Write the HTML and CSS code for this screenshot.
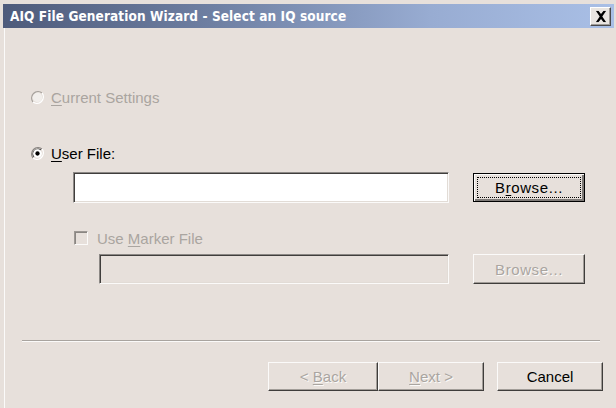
FILE: index.html
```html
<!DOCTYPE html>
<html>
<head>
<meta charset="utf-8">
<title>AIQ File Generation Wizard</title>
<link rel="stylesheet" href="styles.css">
</head>
<body>
<div class="window">
  <div class="titlebar">
    <span class="title">AIQ File Generation Wizard - Select an IQ source</span>
    <button class="close" type="button" aria-label="Close">
      <svg width="10" height="9" viewBox="0 0 10 9"><path d="M1 0h2l2 2.5L7 0h2L6 4.5 9 9H7L5 6.5 3 9H1l3-4.5z" fill="#000"/></svg>
    </button>
  </div>
  <div class="content">
    <label class="option disabled row-current">
      <svg class="radio" width="13" height="13" viewBox="0 0 12 12">
        <path d="M10.2 1.8A6 6 0 0 0 1.8 10.2" fill="none" stroke="#a7a29d" stroke-width="1.2"/>
        <path d="M1.8 10.2A6 6 0 0 0 10.2 1.8" fill="none" stroke="#fff" stroke-width="1.2"/>
        <circle cx="6" cy="6" r="4.4" fill="#f2efec"/>
      </svg>
      <span><u>C</u>urrent Settings</span>
    </label>

    <label class="option row-user">
      <svg class="radio" width="13" height="13" viewBox="0 0 12 12">
        <path d="M10.2 1.8A6 6 0 0 0 1.8 10.2" fill="none" stroke="#8a8683" stroke-width="1.2"/>
        <path d="M9.2 2.8A4.6 4.6 0 0 0 2.8 9.2" fill="none" stroke="#3d3b39" stroke-width="1"/>
        <path d="M1.8 10.2A6 6 0 0 0 10.2 1.8" fill="none" stroke="#fff" stroke-width="1.2"/>
        <circle cx="6" cy="6" r="4" fill="#fff"/>
        <circle cx="6" cy="6" r="2" fill="#000"/>
      </svg>
      <span><u>U</u>ser File:</span>
    </label>

    <div class="field-row row-file">
      <div class="textbox"></div>
      <button class="btn focused" type="button"><span class="focus">B<u>r</u>owse...</span></button>
    </div>

    <label class="option disabled row-marker">
      <span class="checkbox"></span>
      <span>Use <u>M</u>arker File</span>
    </label>

    <div class="field-row row-markerfile">
      <div class="textbox off"></div>
      <button class="btn off" type="button"><span>Browse...</span></button>
    </div>

    <div class="separator"></div>

    <div class="nav">
      <button class="btn off nav-btn" type="button"><span>&lt; <u>B</u>ack</span></button>
      <button class="btn off nav-btn" type="button"><span><u>N</u>ext &gt;</span></button>
      <button class="btn nav-btn cancel" type="button"><span>Cancel</span></button>
    </div>
  </div>
</div>
</body>
</html>
```
FILE: styles.css
```css
html, body {
  margin: 0;
  padding: 0;
  background: #e7e0db;
  width: 616px;
  height: 408px;
  overflow: hidden;
}

.window {
  padding-top: 4px;
  font-family: "Liberation Sans", Arial, sans-serif;
  font-size: 15px;
  color: #000;
}

/* caption bar */
.titlebar {
  margin: 0 2px 0 3px;
  height: 24px;
  display: flex;
  align-items: center;
  justify-content: space-between;
  padding: 0 3px 0 7px;
  background: linear-gradient(90deg, #4e5b7b 0%, #6f80a3 35%, #98acd2 70%, #a9bfe6 100%);
}

.title {
  font-family: "DejaVu Sans Condensed", "DejaVu Sans", sans-serif;
  font-weight: bold;
  font-size: 13.5px;
  color: #fff;
  letter-spacing: 0.1px;
}

.close {
  width: 21px;
  height: 19px;
  padding: 0;
  display: flex;
  align-items: center;
  justify-content: center;
  background: #e9e5e1;
  border: 1px solid;
  border-color: #fff #4a4a4a #4a4a4a #fff;
  box-shadow: inset -1px -1px 0 #a09c98;
}

.close svg { transform: scale(1.3); }

/* dialog body */
.content {
  margin-left: 4px;
  border-left: 1px solid #fbfaf9;
  height: 380px;
  padding-top: 61px;
  box-sizing: border-box;
}

.option {
  display: flex;
  align-items: center;
  height: 16px;
  gap: 7px;
}

.option.disabled { color: #aaa5a0; }
.option u { text-decoration-thickness: 1px; text-underline-offset: 2px; }

.row-current { padding-left: 26px; }
.row-user { padding-left: 26px; margin-top: 40px; }

.radio { flex: none; }

.field-row {
  display: flex;
  align-items: center;
  gap: 24px;
}

.row-file { padding-left: 68px; margin-top: 11px; }

.textbox {
  width: 376px;
  height: 31px;
  box-sizing: border-box;
  background: #fff;
  border: 1px solid;
  border-color: #8c8885 #fbfaf9 #fbfaf9 #8c8885;
  box-shadow: inset 1px 1px 0 #403e3c, inset -1px -1px 0 #e2dcd6;
}

.textbox.off {
  width: 350px;
  height: 30px;
  background: #e7e0db;
  margin-left: 26px;
}

.btn {
  width: 112px;
  height: 29px;
  box-sizing: border-box;
  font-family: "Liberation Sans", Arial, sans-serif;
  font-size: 15px;
  color: #000;
  background: #e7e0db;
  border: 1px solid;
  border-color: #fbfaf9 #3f3d3b #3f3d3b #fbfaf9;
  box-shadow: inset -1px -1px 0 #a29d98;
  padding: 0;
  display: flex;
  align-items: center;
  justify-content: center;
  white-space: pre;
}

.btn u { text-underline-offset: 2px; }

.btn.focused {
  border: 1px solid #000;
  box-shadow: inset 1px 1px 0 #fbfaf9, inset -2px -2px 0 #7d7976;
  padding: 3px;
}

.focus {
  flex: 1;
  align-self: stretch;
  display: flex;
  align-items: center;
  justify-content: center;
  border: 1px dotted #000;
  letter-spacing: 0.6px;
}

.btn.off {
  color: #aaa5a0;
  text-shadow: 1px 1px 0 #fbfaf9;
}

.row-markerfile { margin-top: 8px; padding-left: 68px; }
.row-markerfile .btn { height: 30px; letter-spacing: 0.6px; }

.row-marker { padding-left: 69px; margin-top: 27px; gap: 9px; }

.checkbox {
  flex: none;
  width: 14px;
  height: 14px;
  box-sizing: border-box;
  border: 1px solid;
  border-color: #9d9894 #fbfaf9 #fbfaf9 #9d9894;
  box-shadow: inset 1px 1px 0 #8a8682;
  background: #e7e0db;
}

.separator {
  margin: 56px 16px 0 17px;
  border-top: 1px solid #a9a49f;
  border-bottom: 1px solid #fbfaf9;
  height: 0;
}

.nav {
  display: flex;
  margin-top: 20px;
  padding-left: 263px;
}

.nav-btn { width: 110px; }
.nav-btn + .nav-btn { width: 106px; }
.cancel { margin-left: 13px; }
```
